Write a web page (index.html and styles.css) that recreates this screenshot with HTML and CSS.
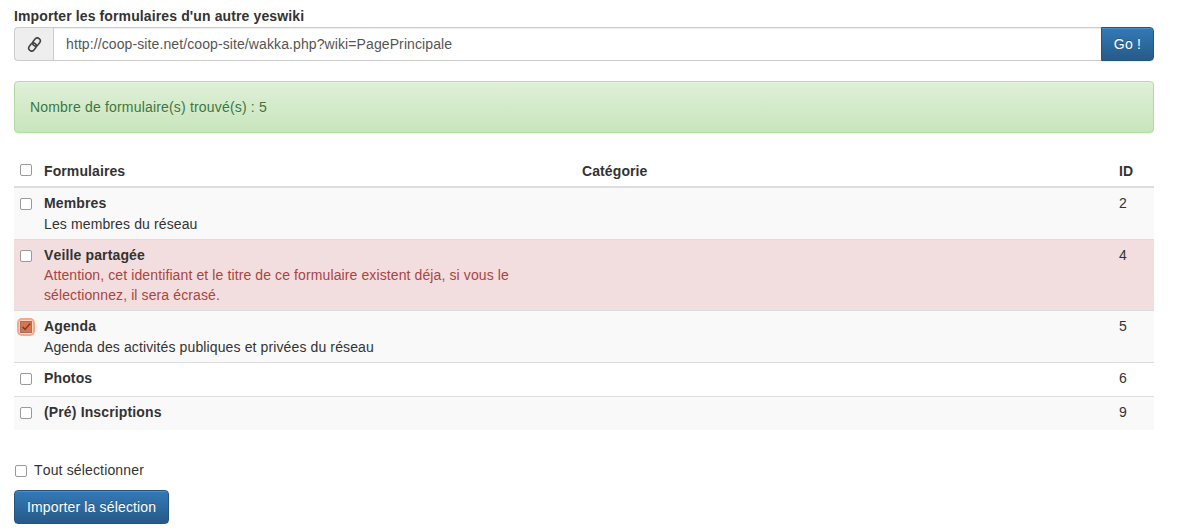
FILE: index.html
```html
<!DOCTYPE html>
<html lang="fr">
<head>
<meta charset="utf-8">
<title>Importer</title>
<link rel="stylesheet" href="styles.css">
</head>
<body>
<form class="page">
  <label class="url-label">Importer les formulaires d'un autre yeswiki</label>
  <div class="input-group">
    <span class="addon">
      <svg class="link-icon" viewBox="0 0 16 16" width="15" height="15"><g transform="rotate(-52 8 8)" fill="none" stroke="#444" stroke-width="1.7"><rect x="0" y="4.9" width="9.2" height="6.2" rx="3.1"/><rect x="6.8" y="4.9" width="9.2" height="6.2" rx="3.1"/></g></svg>
    </span>
    <input class="url-input" type="text" value="http://coop-site.net/coop-site/wakka.php?wiki=PagePrincipale">
    <button class="btn btn-go" type="button">Go !</button>
  </div>
  <div class="alert">Nombre de formulaire(s) trouvé(s) : 5</div>
  <table class="forms">
    <thead>
      <tr>
        <th class="c-check"><input type="checkbox" class="cb"></th>
        <th class="c-name">Formulaires</th>
        <th class="c-cat">Catégorie</th>
        <th class="c-id">ID</th>
      </tr>
    </thead>
    <tbody>
      <tr class="odd">
        <td class="c-check"><input type="checkbox" class="cb"></td>
        <td><strong>Membres</strong><div class="desc">Les membres du réseau</div></td>
        <td></td>
        <td>2</td>
      </tr>
      <tr class="danger">
        <td class="c-check"><input type="checkbox" class="cb"></td>
        <td><strong>Veille partagée</strong><div class="warn">Attention, cet identifiant et le titre de ce formulaire existent déja, si vous le sélectionnez, il sera écrasé.</div></td>
        <td></td>
        <td>4</td>
      </tr>
      <tr class="odd">
        <td class="c-check"><span class="cb-checked"><svg viewBox="0 0 12 12" width="12" height="12"><rect x="0.5" y="0.5" width="11" height="11" fill="#dc7350" stroke="#4a342a" stroke-dasharray="1 1"/><path d="M2.6 5.8 5 8.4 10.2 2.6" fill="none" stroke="#7a3c24" stroke-width="1.5"/></svg></span></td>
        <td><strong>Agenda</strong><div class="desc">Agenda des activités publiques et privées du réseau</div></td>
        <td></td>
        <td>5</td>
      </tr>
      <tr class="single">
        <td class="c-check"><input type="checkbox" class="cb"></td>
        <td><strong>Photos</strong></td>
        <td></td>
        <td>6</td>
      </tr>
      <tr class="odd single">
        <td class="c-check"><input type="checkbox" class="cb"></td>
        <td><strong>(Pré) Inscriptions</strong></td>
        <td></td>
        <td>9</td>
      </tr>
    </tbody>
  </table>
  <label class="select-all"><input type="checkbox" class="cb"><span>Tout sélectionner</span></label>
  <button class="btn btn-import" type="button">Importer la sélection</button>
</form>
</body>
</html>
```
FILE: styles.css
```css
* { box-sizing: border-box; }
html, body { margin: 0; padding: 0; background: #fff; }
body {
  font-family: "Liberation Sans", Arial, sans-serif;
  font-size: 14px;
  line-height: 20px;
  color: #333;
  font-kerning: none;
}
.page { width: 1140px; margin-left: 14px; padding-top: 6px; }
.url-label { display: block; font-weight: 700; margin-bottom: 1px; letter-spacing: .12px; }
.input-group { display: flex; height: 34px; }
.addon {
  width: 39px;
  flex: none;
  display: flex;
  align-items: center;
  justify-content: center;
  background: #eee;
  border: 1px solid #ccc;
  border-right: 0;
  border-radius: 4px 0 0 4px;
}
.url-input {
  flex: 1;
  min-width: 0;
  height: 34px;
  padding: 6px 12px;
  font: inherit;
  font-kerning: none;
  letter-spacing: .1px;
  color: #555;
  border: 1px solid #ccc;
  box-shadow: inset 0 1px 1px rgba(0,0,0,.075);
  outline: 0;
}
.btn {
  font: inherit;
  font-kerning: none;
  color: #fff;
  white-space: nowrap;
  background: linear-gradient(to bottom, #337ab7 0, #265a88 100%);
  border: 1px solid #245580;
  text-shadow: 0 -1px 0 rgba(0,0,0,.2);
  box-shadow: inset 0 1px 0 rgba(255,255,255,.15), 0 1px 1px rgba(0,0,0,.075);
  padding: 6px 12px;
  height: 34px;
}
.btn-go { flex: none; margin-left: -1px; width: 53px; padding: 6px 0; border-radius: 0 4px 4px 0; letter-spacing: .2px; }
.alert {
  margin-top: 20px;
  height: 52px;
  padding: 15px;
  color: #3c763d;
  background: linear-gradient(to bottom, #dff0d8 0, #c8e5bc 100%);
  border: 1px solid #b2dba1;
  border-radius: 4px;
  letter-spacing: .18px;
  text-shadow: 0 1px 0 rgba(255,255,255,.2);
  box-shadow: inset 0 1px 0 rgba(255,255,255,.25), 0 1px 2px rgba(0,0,0,.05);
}
.forms { width: 100%; margin-top: 20px; border-collapse: collapse; table-layout: fixed; }
.forms th { text-align: left; padding: 8px 0 5px; border-bottom: 2px solid #ddd; vertical-align: bottom; line-height: 20px; height: 34px; letter-spacing: .1px; }
.forms td { padding: 5px 0; vertical-align: top; border-top: 1px solid #ddd; line-height: 20px; }
.forms tbody tr:first-child td { border-top: 0; }
.forms .single td { padding-bottom: 8px; }
.forms td.c-check, .forms th.c-check { width: 30px; padding-left: 6px; }
.c-name { width: 538px; }
.c-cat { width: 537px; }
.c-id { width: 35px; }
.forms td:nth-child(2) { padding-right: 20px; }
.forms strong { display: block; letter-spacing: .14px; }
.desc { margin-top: 1px; letter-spacing: .12px; }
.odd td { background: #f9f9f9; }
.danger td { background: #f2dede; }
.warn { color: #a94442; letter-spacing: .11px; }
.cb {
  appearance: none;
  display: block;
  margin: 0;
  width: 12px;
  height: 12px;
  background: #fff;
  border: 1px solid #9a9a9a;
  border-radius: 2px;
}
.forms th .cb { margin-bottom: 5px; }
td .cb { margin-top: 5px; }
.cb-checked {
  display: block;
  width: 12px;
  height: 12px;
  margin-top: 5px;
  box-shadow: 0 0 0 1px #fbd6c6, 0 0 0 3px #f8a888;
  border-radius: 2px;
}
.cb-checked svg { display: block; }
.select-all { display: flex; align-items: center; margin-top: 30px; padding-left: 1px; }
.select-all .cb { margin-right: 7px; margin-top: 1px; }
.select-all span { letter-spacing: .15px; }
.btn-import { display: block; margin-top: 10px; border-radius: 4px; letter-spacing: .15px; }
```
